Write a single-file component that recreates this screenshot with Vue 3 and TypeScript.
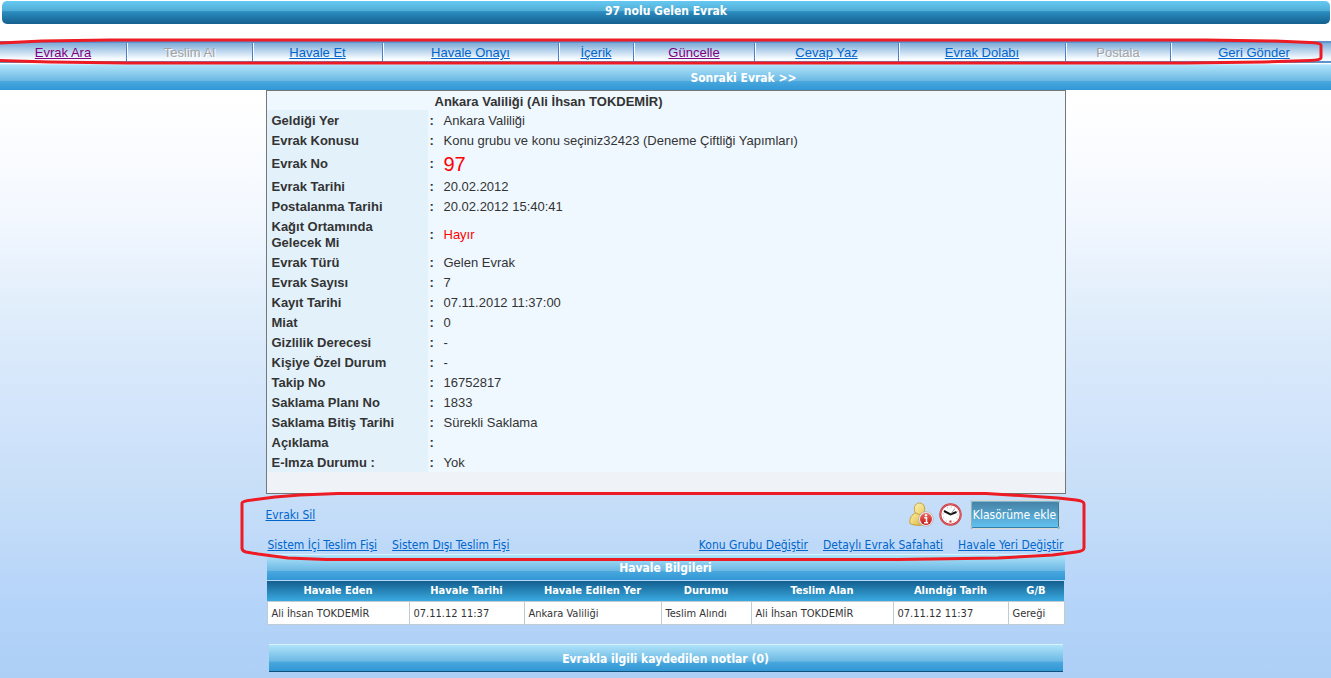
<script setup lang="ts">
interface MenuItem {
  label: string
  state?: 'visited' | 'disabled'
}

interface DetailRow {
  label: string
  value: string
  kind?: 'large' | 'alert'
}

const menu: MenuItem[] = [
  { label: 'Evrak Ara', state: 'visited' },
  { label: 'Teslim Al', state: 'disabled' },
  { label: 'Havale Et' },
  { label: 'Havale Onayı' },
  { label: 'İçerik' },
  { label: 'Güncelle', state: 'visited' },
  { label: 'Cevap Yaz' },
  { label: 'Evrak Dolabı' },
  { label: 'Postala', state: 'disabled' },
  { label: 'Geri Gönder' },
]

const details: DetailRow[] = [
  { label: 'Geldiği Yer', value: 'Ankara Valiliği' },
  { label: 'Evrak Konusu', value: 'Konu grubu ve konu seçiniz32423 (Deneme Çiftliği Yapımları)' },
  { label: 'Evrak No', value: '97', kind: 'large' },
  { label: 'Evrak Tarihi', value: '20.02.2012' },
  { label: 'Postalanma Tarihi', value: '20.02.2012 15:40:41' },
  { label: 'Kağıt Ortamında Gelecek Mi', value: 'Hayır', kind: 'alert' },
  { label: 'Evrak Türü', value: 'Gelen Evrak' },
  { label: 'Evrak Sayısı', value: '7' },
  { label: 'Kayıt Tarihi', value: '07.11.2012 11:37:00' },
  { label: 'Miat', value: '0' },
  { label: 'Gizlilik Derecesi', value: '-' },
  { label: 'Kişiye Özel Durum', value: '-' },
  { label: 'Takip No', value: '16752817' },
  { label: 'Saklama Planı No', value: '1833' },
  { label: 'Saklama Bitiş Tarihi', value: 'Sürekli Saklama' },
  { label: 'Açıklama', value: '' },
  { label: 'E-Imza Durumu :', value: 'Yok' },
]

const columns: string[] = ['Havale Eden', 'Havale Tarihi', 'Havale Edilen Yer', 'Durumu', 'Teslim Alan', 'Alındığı Tarih', 'G/B']
const transfers: string[][] = [
  ['Ali İhsan TOKDEMİR', '07.11.12 11:37', 'Ankara Valiliği', 'Teslim Alındı', 'Ali İhsan TOKDEMİR', '07.11.12 11:37', 'Gereği'],
]
</script>

<template>
  <div class="page">
    <h1 class="title-bar">97 nolu Gelen Evrak</h1>

    <nav class="menu">
      <div v-for="item in menu" :key="item.label" class="menu-cell">
        <a v-if="item.state === 'disabled'" class="disabled" aria-disabled="true">{{ item.label }}</a>
        <a v-else href="#" :class="item.state">{{ item.label }}</a>
      </div>
      <svg class="marker menu-marker" viewBox="0 0 1331 28" preserveAspectRatio="none" aria-hidden="true">
        <path d="M0 6 L11 5.500 L42 4 L110 3 H1205 L1275 4 L1310 5.500 Q1321 6 1321 8 V21 Q1321 23 1310 23.500 L1265 25 L1185 26 H127 L50 25 L15 24 L0 23.500" />
      </svg>
    </nav>

    <div class="next-bar"><a href="#">Sonraki Evrak &gt;&gt;</a></div>

    <main class="content">
      <section class="panel">
        <h2>Ankara Valiliği (Ali İhsan TOKDEMİR)</h2>
        <table class="details">
          <tbody>
            <tr v-for="row in details" :key="row.label">
              <th scope="row">{{ row.label }}</th>
              <td class="colon">:</td>
              <td :class="row.kind">{{ row.value }}</td>
            </tr>
          </tbody>
        </table>
        <div class="panel-foot"></div>
      </section>

      <section class="actions">
        <div class="action-row">
          <a href="#">Evrakı Sil</a>
          <div class="tools">
            <svg class="person" viewBox="0 0 25 26" role="img" aria-label="Kişi bilgisi">
              <defs>
                <linearGradient id="gold" x1="0" y1="0" x2="1" y2="1">
                  <stop offset="0" stop-color="#fffbd0" />
                  <stop offset="0.5" stop-color="#f0d878" />
                  <stop offset="1" stop-color="#c79a2e" />
                </linearGradient>
                <linearGradient id="ruby" x1="0" y1="0" x2="0" y2="1">
                  <stop offset="0" stop-color="#ee6a62" />
                  <stop offset="1" stop-color="#c41414" />
                </linearGradient>
              </defs>
              <path d="M1 21.500 C0 16 3 12.500 6.500 11 C4 7 5.500 1 10.500 1 C15.500 1 17 7 14.500 11 C18 12 19 15 19 21.500 C15 24 5 24 1 21.500Z" fill="url(#gold)" stroke="#c6a13d" stroke-width="1" />
              <path d="M6.500 11 Q10 14 14.500 11" fill="none" stroke="#c6a13d" />
              <circle cx="17" cy="17" r="7.300" fill="#f4f0f0" stroke="#b0b0b0" stroke-width="0.800" />
              <circle cx="17" cy="17" r="6" fill="url(#ruby)" />
              <path d="M15.300 15.700 H17.500 V20.500 M15 20.700 H19.200" fill="none" stroke="#fff" stroke-width="1.500" />
              <circle cx="17" cy="13.200" r="1.200" fill="#fff" />
            </svg>
            <svg class="clock" viewBox="0 0 23 23" role="img" aria-label="Saat">
              <circle cx="11.500" cy="11.500" r="10.200" fill="#fff" stroke="#c8323a" stroke-width="2" />
              <circle cx="11.500" cy="11.500" r="10.400" fill="none" stroke="#e97776" stroke-width="0.700" />
              <circle cx="11.500" cy="11.500" r="7.500" fill="none" stroke="#999" stroke-width="1" stroke-dasharray="0.900 3.027" />
              <path d="M5 8 L11.500 11.500 L17.500 9" fill="none" stroke="#111" stroke-width="2" />
              <path d="M11.500 11.500 L15.500 6" stroke="#777" stroke-width="0.800" />
              <rect x="10.500" y="17.500" width="2" height="2" fill="#d33" />
            </svg>
            <button type="button">Klasörüme ekle</button>
          </div>
        </div>
        <div class="link-row">
          <a href="#">Sistem İçi Teslim Fişi</a>
          <a href="#">Sistem Dışı Teslim Fişi</a>
          <a href="#" class="push">Konu Grubu Değiştir</a>
          <a href="#">Detaylı Evrak Safahati</a>
          <a href="#">Havale Yeri Değiştir</a>
        </div>
        <svg class="marker action-marker" viewBox="0 0 850 72" preserveAspectRatio="none" aria-hidden="true">
          <path d="M4 58 V12 Q4 10 14 9 L37 6 L62 4 L100 2.500 H748 L790 5 L820 7 L838 9 Q846 10 846 13 V57 Q846 60 838 61 L815 64 L760 67 L660 68.500 H88 L50 67 L20 63 L8 61 Q4 60 4 57" />
        </svg>
      </section>

      <section class="transfers">
        <h2 class="glossy">Havale Bilgileri</h2>
        <table>
          <colgroup>
            <col class="c-who" /><col class="c-date" /><col class="c-place" /><col class="c-state" />
            <col class="c-who" /><col class="c-date" /><col class="c-kind" />
          </colgroup>
          <thead>
            <tr><th v-for="c in columns" :key="c" scope="col">{{ c }}</th></tr>
          </thead>
          <tbody>
            <tr v-for="(r, i) in transfers" :key="i">
              <td v-for="(cell, j) in r" :key="j">{{ cell }}</td>
            </tr>
          </tbody>
        </table>
      </section>

      <h2 class="glossy notes">Evrakla ilgili kaydedilen notlar (0)</h2>
    </main>
  </div>
</template>

<style>
body {
  margin: 0;
}
</style>

<style scoped>
.page {
  box-sizing: border-box;
  min-height: 100vh;
  padding-top: 1px;
  overflow: hidden;
  background: linear-gradient(#fff 100px, #f3f8ff 32%, #e1eefb 45%, #d3e5fb 60%, #c8dff8 72%, #b5d4f9 89%, #adcff6);
  color: #333;
  font: 11px/14px "DejaVu Sans Condensed", Tahoma, sans-serif;
}
h1,
h2 {
  margin: 0;
}
a {
  color: #06c;
}
.title-bar {
  height: 23px;
  margin: 0 1px 0 2px;
  border-radius: 5px;
  background: linear-gradient(#66c9f2, #50add5 43%, #2c8dc1 46%, #14608f);
  color: #fff;
  font-size: 12px;
  line-height: 20px;
  text-align: center;
}
.menu {
  position: relative;
  display: grid;
  grid-template-columns: 127fr 126fr 130fr 176fr 75fr 121fr 144fr 167fr 105fr 160fr;
  margin-top: 17px;
  border: solid #5f93cb;
  border-width: 2px 0;
  background: linear-gradient(#7eacda, #c3daef 50%, #f3faff 85%, #f7fcff);
  font: 13px/16px "Liberation Sans", Arial, sans-serif;
  text-align: center;
}
.menu-cell {
  padding-top: 2px;
  border-right: 1px solid #4a7fcf;
  box-shadow: 1px 0 #fff;
}
.menu-cell:nth-last-child(2) {
  padding-left: 6px;
  border: 0;
  box-shadow: none;
}
.visited {
  color: #800080;
}
.disabled {
  color: #a3a3a3;
  text-shadow: 1px 1px #fff;
}
.marker {
  position: absolute;
  z-index: 2;
  overflow: visible;
  fill: none;
  stroke: #ed1c24;
  stroke-width: 3;
  pointer-events: none;
}
.marker path {
  vector-effect: non-scaling-stroke;
}
.menu-marker {
  top: -6px;
  left: 0;
  width: 100%;
  height: 28px;
}
.next-bar {
  margin-top: 1px;
  border-top: 1px solid #c9edfc;
  padding: 2px 0 0 156px;
  background: linear-gradient(#afe3fa, #6cb9e4 62%, #49a7dd 66%, #3097d5);
  font-size: 12px;
  font-weight: bold;
  line-height: 23px;
  text-align: center;
}
.next-bar a {
  color: #fff;
  text-decoration: none;
}
.content {
  width: 100%;
  max-width: 800px;
  margin: 0 auto;
}
.panel {
  border: 1px solid #777;
  background: #eff8ff;
  font: 13px/16px "Liberation Sans", Arial, sans-serif;
}
.panel h2 {
  padding: 3px 0 0 168px;
  font-size: 13px;
}
.details {
  width: 100%;
  border-collapse: collapse;
}
.details th {
  box-sizing: border-box;
  width: 161px;
  padding: 3px 30px 1px 5px;
  background: #e3f1fb;
  text-align: left;
}
.details td {
  padding: 3px 4px 1px;
}
.details .colon {
  width: 8px;
  padding: 3px 2px 1px;
  font-weight: bold;
}
.details .large {
  color: #f00;
  font-size: 20px;
  line-height: 22px;
}
.details .alert {
  color: #f00;
}
.panel-foot {
  height: 21px;
  background: #eff3f8;
}
.actions {
  position: relative;
  padding-top: 6px;
  font-size: 12px;
}
.action-row {
  display: flex;
  justify-content: space-between;
  align-items: center;
  padding-right: 6px;
}
.tools {
  display: flex;
  align-items: center;
  gap: 5px;
}
.tools button {
  width: 90px;
  height: 29px;
  margin-left: 3px;
  padding: 0;
  border: 2px solid #4b9ac2;
  border-color: #7db7d4 #337fa8 #337fa8 #7db7d4;
  border-radius: 3px;
  outline: 1px solid #d8d8d0;
  outline-offset: -1px;
  background: linear-gradient(#4682a7, #62c1ef);
  color: #fff;
  font: inherit;
  white-space: nowrap;
}
.person {
  width: 25px;
  height: 26px;
}
.clock {
  width: 23px;
  height: 23px;
}
.link-row {
  display: flex;
  gap: 15px;
  padding: 9px 2px 2px;
}
.push {
  margin-left: auto;
}
.action-marker {
  top: -3px;
  left: -28px;
  width: calc(100% + 50px);
  height: 72px;
}
.glossy {
  border-top: 1px solid #d8f3ff;
  padding-top: 2px;
  background: linear-gradient(#afe3fa, #6cb9e4 62%, #49a7dd 66%, #3097d5);
  color: #fff;
  font-size: 12px;
  line-height: 23px;
  text-align: center;
}
.transfers {
  margin: 0 1px;
}
.transfers table {
  width: 100%;
  margin-top: 1px;
  border-collapse: collapse;
  table-layout: fixed;
}
.transfers thead {
  background: linear-gradient(#145f8f, #3bade4);
}
.transfers th {
  padding: 0;
  color: #fff;
  line-height: 20px;
}
.transfers td {
  padding: 5px 4px 3px;
  border: 1px solid #c0ccd2;
  background: #fff;
}
.c-who {
  width: 142px;
}
.c-date {
  width: 115px;
}
.c-place {
  width: 137px;
}
.c-state {
  width: 90px;
}
.notes {
  margin: 19px 3px 0;
  border-bottom: 1px solid #12507c;
  line-height: 24px;
}
</style>
